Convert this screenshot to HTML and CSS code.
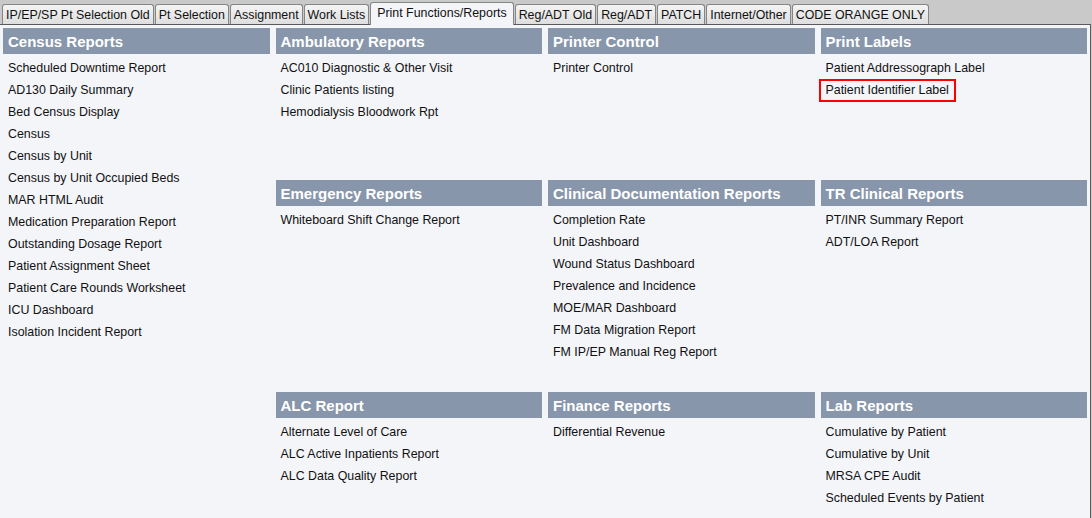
FILE: index.html
```html
<!DOCTYPE html>
<html>
<head>
<meta charset="utf-8">
<link rel="stylesheet" href="styles.css">
</head>
<body>
<div class="tabs">
  <div class="tab">IP/EP/SP Pt Selection Old</div>
  <div class="tab">Pt Selection</div>
  <div class="tab">Assignment</div>
  <div class="tab">Work Lists</div>
  <div class="tab active">Print Functions/Reports</div>
  <div class="tab">Reg/ADT Old</div>
  <div class="tab">Reg/ADT</div>
  <div class="tab">PATCH</div>
  <div class="tab">Internet/Other</div>
  <div class="tab">CODE ORANGE ONLY</div>
</div>
<div class="panel">
  <div class="grid">
    <div class="group census">
      <div class="head">Census Reports</div>
      <div class="item">Scheduled Downtime Report</div>
      <div class="item">AD130 Daily Summary</div>
      <div class="item">Bed Census Display</div>
      <div class="item">Census</div>
      <div class="item">Census by Unit</div>
      <div class="item">Census by Unit Occupied Beds</div>
      <div class="item">MAR HTML Audit</div>
      <div class="item">Medication Preparation Report</div>
      <div class="item">Outstanding Dosage Report</div>
      <div class="item">Patient Assignment Sheet</div>
      <div class="item">Patient Care Rounds Worksheet</div>
      <div class="item">ICU Dashboard</div>
      <div class="item">Isolation Incident Report</div>
    </div>
    <div class="group">
      <div class="head">Ambulatory Reports</div>
      <div class="item">AC010 Diagnostic &amp; Other Visit</div>
      <div class="item">Clinic Patients listing</div>
      <div class="item">Hemodialysis Bloodwork Rpt</div>
    </div>
    <div class="group">
      <div class="head">Printer Control</div>
      <div class="item">Printer Control</div>
    </div>
    <div class="group">
      <div class="head">Print Labels</div>
      <div class="item">Patient Addressograph Label</div>
      <div class="item"><span class="marked">Patient Identifier Label</span></div>
    </div>
    <div class="group">
      <div class="head">Emergency Reports</div>
      <div class="item">Whiteboard Shift Change Report</div>
    </div>
    <div class="group">
      <div class="head">Clinical Documentation Reports</div>
      <div class="item">Completion Rate</div>
      <div class="item">Unit Dashboard</div>
      <div class="item">Wound Status Dashboard</div>
      <div class="item">Prevalence and Incidence</div>
      <div class="item">MOE/MAR Dashboard</div>
      <div class="item">FM Data Migration Report</div>
      <div class="item">FM IP/EP Manual Reg Report</div>
    </div>
    <div class="group">
      <div class="head">TR Clinical Reports</div>
      <div class="item">PT/INR Summary Report</div>
      <div class="item">ADT/LOA Report</div>
    </div>
    <div class="group first-col">
      <div class="head">ALC Report</div>
      <div class="item">Alternate Level of Care</div>
      <div class="item">ALC Active Inpatients Report</div>
      <div class="item">ALC Data Quality Report</div>
    </div>
    <div class="group">
      <div class="head">Finance Reports</div>
      <div class="item">Differential Revenue</div>
    </div>
    <div class="group">
      <div class="head">Lab Reports</div>
      <div class="item">Cumulative by Patient</div>
      <div class="item">Cumulative by Unit</div>
      <div class="item">MRSA CPE Audit</div>
      <div class="item">Scheduled Events by Patient</div>
    </div>
  </div>
</div>
</body>
</html>
```
FILE: styles.css
```css
html, body {
  margin: 0;
  padding: 0;
  height: 100%;
}
body {
  background: #c9c9c9;
  font-family: "Liberation Sans", Arial, sans-serif;
  color: #111;
  display: flex;
  flex-direction: column;
  overflow: hidden;
}
.tabs {
  display: flex;
  align-items: flex-end;
  height: 24px;
  flex: none;
  padding-left: 2px;
  position: relative;
  z-index: 1;
}
.tab {
  height: 19px;
  line-height: 21px;
  padding: 0 3px 0 3px;
  margin-right: 1px;
  font-size: 12.4px;
  color: #111;
  background: linear-gradient(#f4f4f4, #dedede);
  border: 1px solid #858585;
  border-bottom: none;
  border-radius: 3px 3px 0 0;
  white-space: nowrap;
}
.tab.active {
  height: 22px;
  line-height: 21px;
  background: #f4f5f9;
  margin-bottom: -1px;
  padding: 0 6px 0 6px;
}
.panel {
  flex: 1;
  background: #f4f5f9;
  border-top: 1px solid #5a5a5a;
  border-right: 1px solid #5a5a5a;
  margin-right: 1px;
  padding: 3px 3px 0 3px;
}
.grid {
  display: grid;
  grid-template-columns: repeat(4, 1fr);
  grid-template-rows: 152px 212px auto;
  column-gap: 6px;
}
.census {
  grid-row: 1 / span 2;
}
.first-col {
  grid-column: 2;
}
.head {
  height: 25px;
  line-height: 25px;
  padding-top: 1px;
  background: #8796ab;
  color: #fff;
  font-weight: bold;
  font-size: 15px;
  padding-left: 5px;
  margin-bottom: 3px;
  white-space: nowrap;
}
.item {
  height: 22px;
  line-height: 22px;
  font-size: 12.4px;
  padding-left: 5px;
  white-space: nowrap;
}
.marked {
  display: inline-block;
  line-height: 19px;
  border: 2px solid #f00;
  padding: 0 5px;
  margin-left: -7px;
  vertical-align: top;
}
```
